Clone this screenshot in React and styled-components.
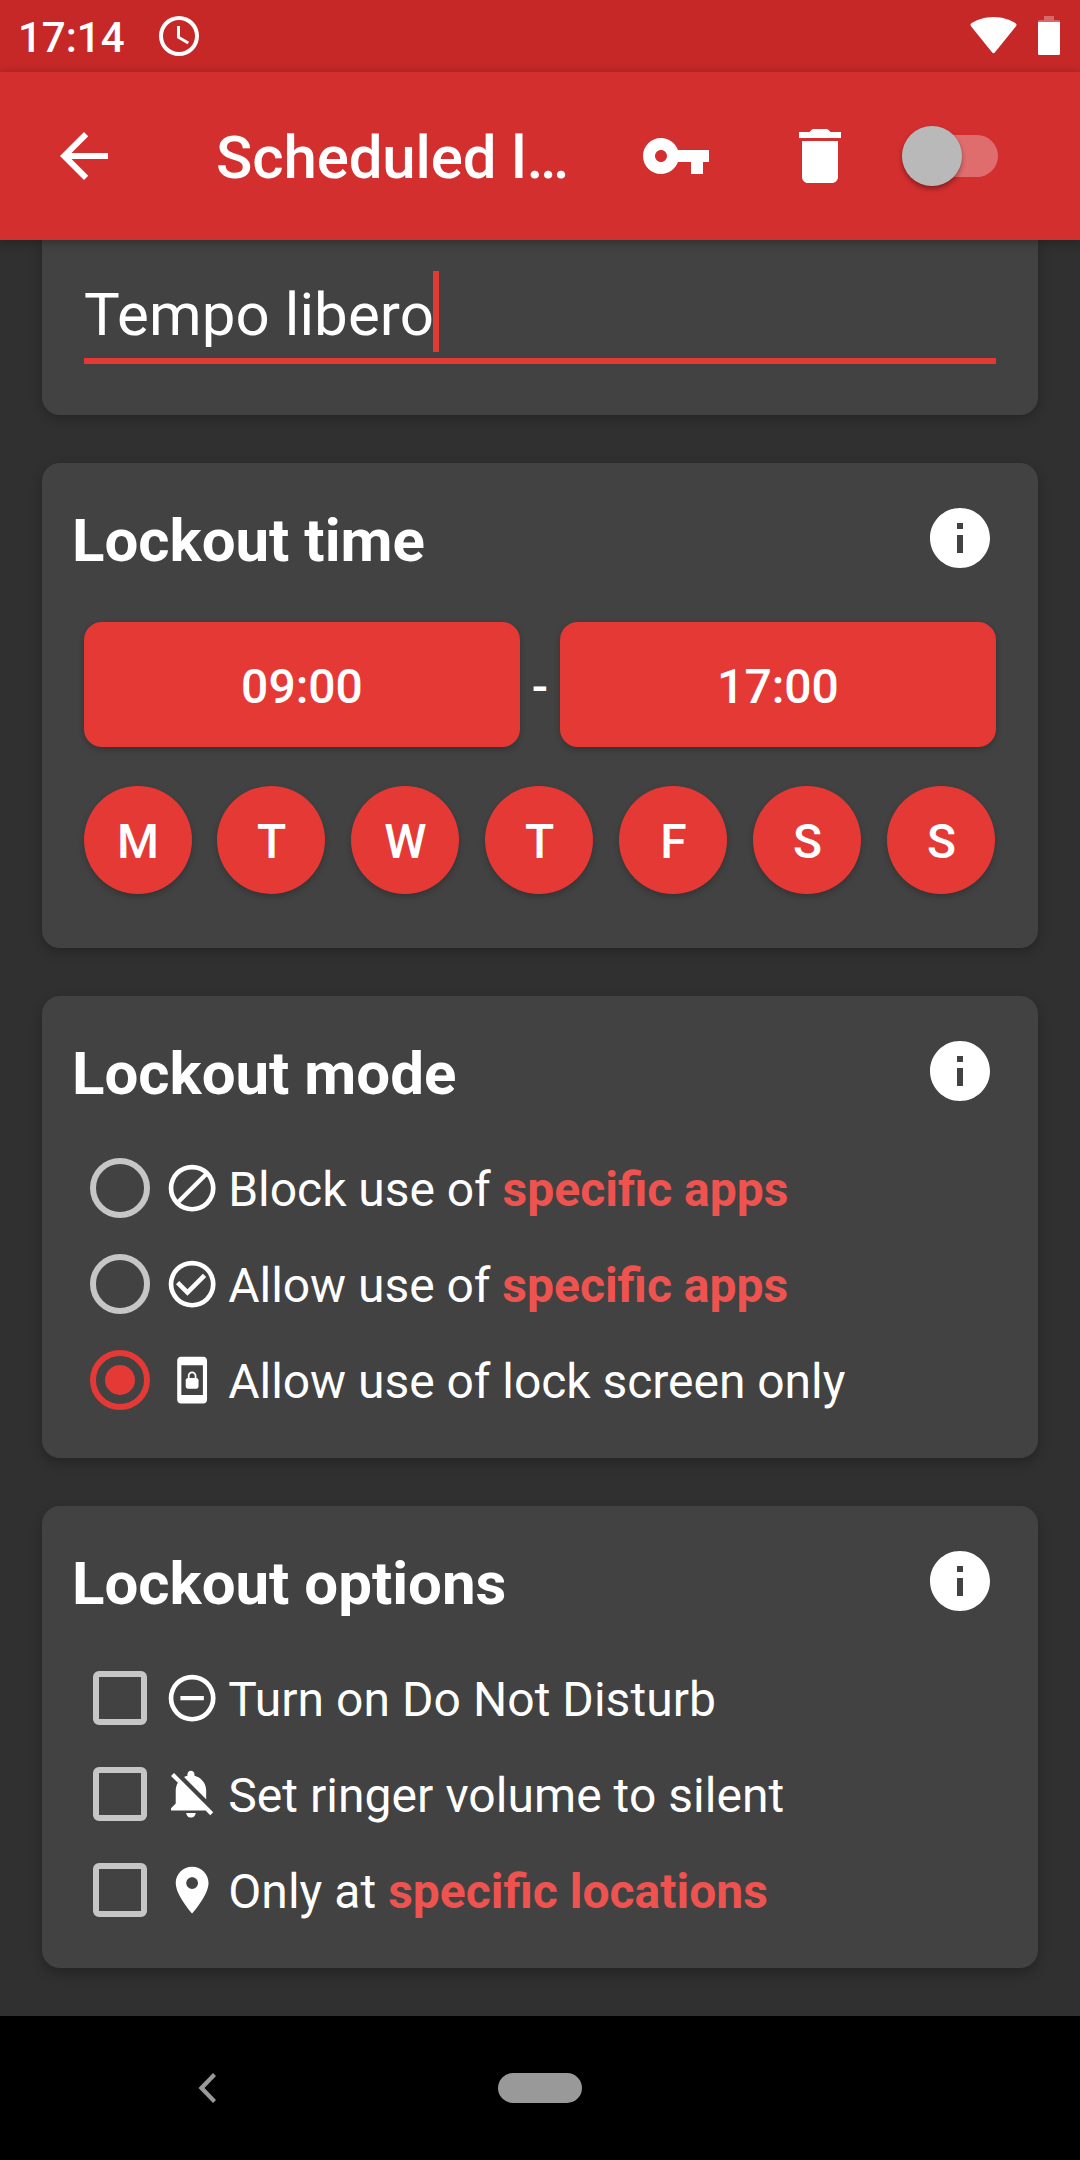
import React from "react";
import styled, { createGlobalStyle } from "styled-components";

const Global = createGlobalStyle`
  * { box-sizing: border-box; }
  body {
    margin: 0;
    background: #303030;
    font-family: Roboto, "Liberation Sans", sans-serif;
    color: #fff;
  }
  button { font: inherit; color: inherit; border: 0; padding: 0; background: none; }
`;

const Screen = styled.div`
  width: 1080px;
  height: 2160px;
  display: flex;
  flex-direction: column;
  overflow: hidden;
  background: #303030;
`;

const Svg = styled.svg`
  display: block;
  flex: none;
  width: ${(p) => p.$w}px;
  height: ${(p) => p.$h || p.$w}px;
  fill: currentColor;
`;

const StatusBar = styled.header`
  flex: none;
  height: 72px;
  padding: 0 20px 0 18px;
  display: flex;
  align-items: center;
  justify-content: space-between;
  background: #c62828;
`;

const StatusGroup = styled.div`
  display: flex;
  align-items: center;
  gap: ${(p) => p.$gap}px;
`;

const Clock = styled.span`
  font-size: 42px;
  font-weight: 500;
  line-height: 48px;
  padding-top: 4px;
`;

const AppBar = styled.nav`
  flex: none;
  height: 168px;
  padding: 0 82px 0 48px;
  display: flex;
  align-items: center;
  background: #d32f2f;
  box-shadow: 0 2px 10px rgba(0, 0, 0, 0.3);
  z-index: 1;
`;

const IconButton = styled.button`
  flex: none;
  margin-right: ${(p) => p.$after}px;
`;

const Title = styled.h1`
  margin: 0 72px 0 0;
  width: 352px;
  font-size: 60px;
  font-weight: 500;
  line-height: 70px;
  letter-spacing: -0.12px;
  padding-top: 4px;
  white-space: nowrap;
`;

const Track = styled.div`
  width: 96px;
  height: 42px;
  display: flex;
  align-items: center;
  border-radius: 21px;
  background: #e06d6d;
`;

const Thumb = styled.div`
  flex: none;
  width: 60px;
  height: 60px;
  border-radius: 50%;
  background: #b9b9b9;
  box-shadow: 0 3px 5px rgba(0, 0, 0, 0.35);
`;

const Content = styled.main`
  flex: 1;
  min-height: 0;
  padding: 0 42px;
  display: flex;
  flex-direction: column;
  gap: 48px;
`;

const Card = styled.section`
  flex: none;
  height: ${(p) => p.$height}px;
  padding: 0 30px 30px;
  border-radius: ${(p) => (p.$cut ? "0 0 18px 18px" : "18px")};
  background: #424242;
  box-shadow: 0 ${(p) => p.$depth}px 12px rgba(0, 0, 0, 0.24);
`;

const NameField = styled.div`
  margin: 0 12px;
  height: 124px;
  padding-top: 31px;
  display: flex;
  align-items: flex-start;
  border-bottom: 6px solid #e53935;
  font-size: 60px;
`;

const NameText = styled.span`
  width: 349px;
  padding-top: 6px;
  line-height: 75px;
  letter-spacing: 0.1px;
  white-space: nowrap;
`;

const Caret = styled.span`
  width: 6px;
  height: 81px;
  background: #e53935;
`;

const CardHeader = styled.div`
  height: 144px;
  padding: 6px 12px 0 0;
  display: flex;
  align-items: center;
  justify-content: space-between;
`;

const CardTitle = styled.h2`
  margin: 0;
  padding-top: 5px;
  font-size: 60px;
  font-weight: 700;
  line-height: 70px;
`;

const TimeRow = styled.div`
  margin: 15px 12px 39px;
  display: flex;
  align-items: center;
  font-size: 48px;
  font-weight: 500;
`;

const TimeButton = styled.button`
  flex: 1;
  height: 125px;
  padding-top: 4px;
  border-radius: 18px;
  background: #e53935;
  box-shadow: 0 3px 6px rgba(0, 0, 0, 0.22);
`;

const Dash = styled.span`
  width: 40px;
  padding-top: 4px;
  text-align: center;
`;

const Days = styled.div`
  margin: 0 12px;
  display: flex;
  gap: 26px;
`;

const Day = styled.button`
  flex: none;
  width: 108px;
  height: 108px;
  padding: 3px 0 0 1px;
  border-radius: 50%;
  background: #e53935;
  box-shadow: 0 3px 6px rgba(0, 0, 0, 0.22);
  font-size: 48px;
  font-weight: 500;

  &:first-child {
    margin-right: -1px;
    padding-left: 0;
  }
`;

const Option = styled.label`
  height: 96px;
  padding-left: 18px;
  display: flex;
  align-items: center;
  font-size: 48px;
`;

const Radio = styled.span`
  width: 60px;
  height: 60px;
  margin-right: 14px;
  display: grid;
  place-items: center;
  border: 6px solid ${(p) => (p.$on ? "#e53935" : "#c6c6c6")};
  border-radius: 50%;

  &::after {
    content: "";
    width: 30px;
    height: 30px;
    border-radius: 50%;
    background: ${(p) => (p.$on ? "#e53935" : "transparent")};
  }
`;

const Checkbox = styled.span`
  width: 54px;
  height: 54px;
  margin: 0 17px 0 3px;
  border: 6px solid #c6c6c6;
  border-radius: 6px;
`;

const OptionText = styled.span`
  margin-left: 8px;
  padding-top: 3px;
  line-height: 56px;
  letter-spacing: ${(p) => p.$tracking || 0}px;
  font-variant-ligatures: common-ligatures;
  white-space: pre;
`;

const Link = styled.b`
  font-weight: 700;
  letter-spacing: 0;
  color: #ef5350;
`;

const NavBar = styled.footer`
  flex: none;
  height: 144px;
  padding-left: 180px;
  display: flex;
  align-items: center;
  background: #000;
  color: #999;
`;

const HomePill = styled.button`
  width: 84px;
  height: 30px;
  margin-left: 264px;
  border-radius: 15px;
  background: #999;
`;

function Icon({ d, size = 72 }) {
  return (
    <Svg viewBox="0 0 24 24" $w={size}>
      <path fillRule="evenodd" d={d} />
    </Svg>
  );
}

const ring = "M12 2a10 10 0 1 0 0 20a10 10 0 1 0 0-20zm0 2a8 8 0 1 1 0 16a8 8 0 1 1 0-16z";
const icons = {
  back: "M20 11H7.83l5.59-5.59L12 4l-8 8 8 8 1.41-1.41L7.83 13H20v-2z",
  key: "M12.65 10C11.83 7.67 9.61 6 7 6c-3.31 0-6 2.69-6 6s2.69 6 6 6c2.61 0 4.83-1.67 5.65-4H17v4h4v-4h2v-4H12.65zM7 14c-1.1 0-2-.9-2-2s.9-2 2-2 2 .9 2 2-.9 2-2 2z",
  trash: "M6 19c0 1.1.9 2 2 2h8c1.1 0 2-.9 2-2V7H6v12zM19 4h-3.5l-.71-.71c-.18-.18-.44-.29-.7-.29H9.91c-.26 0-.52.11-.7.29L8.5 4H5v2h14V4z",
  info: "M12 2C6.48 2 2 6.48 2 12s4.48 10 10 10 10-4.48 10-10S17.52 2 12 2zm1 15h-2v-6h2v6zm0-8h-2V7h2v2z",
  clock: ring + "M12.5 7H11v6l5.25 3.15.75-1.23-4.5-2.67z",
  block: ring,
  check: ring + "M10 17l-4.9-4.9 1.4-1.4 3.5 3.45 6.6-6.6 1.4 1.4z",
  minus: ring + "M7 11.1h10v1.8H7z",
  phone: "M10.18 15.64h3.64c.5 0 .91-.41.91-.91V12c0-.5-.41-.91-.91-.91v-.91c0-1.01-.82-1.82-1.82-1.82s-1.82.81-1.82 1.82v.91c-.5 0-.91.41-.91.91v2.73c0 .5.41.91.91.91zm.73-5.46c0-.6.49-1.09 1.09-1.09s1.09.49 1.09 1.09v.91h-2.18zM16.75 2h-9.5c-.9 0-1.61.72-1.61 1.62v16.76c0 .9.71 1.62 1.61 1.62h9.5c.9 0 1.61-.72 1.61-1.62V3.62c0-.9-.71-1.62-1.61-1.62zM16.6 18.36H7.4V5.64h9.2z",
  pin: "M12 2C8.13 2 5 5.13 5 9c0 5.25 7 13 7 13s7-7.75 7-13c0-3.87-3.13-7-7-7zm0 9.5c-1.38 0-2.5-1.12-2.5-2.5s1.12-2.5 2.5-2.5 2.5 1.12 2.5 2.5-1.12 2.5-2.5 2.5z",
  bell: "M11.5 22c1.1 0 2-.9 2-2h-4c0 1.1.9 2 2 2zM18 10.5c0-3.07-2.13-5.64-5-6.32V3.5c0-.83-.67-1.5-1.5-1.5S10 2.67 10 3.5v.68c-.51.12-.99.32-1.45.56L18 14.18V10.5zm-.27 8.5l2 2L21 19.73 4.27 3 3 4.27l2.92 2.92C5.34 8.16 5 9.29 5 10.5V16l-2 2v1h14.73z",
};

function BlockIcon() {
  return (
    <Svg viewBox="0 0 24 24" $w={56.25}>
      <path fillRule="evenodd" d={icons.block} />
      <path d="M17.3 5.4l1.3 1.3L6.7 18.6l-1.3-1.3z" />
    </Svg>
  );
}

const modes = [
  { icon: <BlockIcon />, text: "Block use of ", link: "specific apps" },
  { icon: <Icon d={icons.check} size={56.25} />, text: "Allow use of ", link: "specific apps" },
  { icon: <Icon d={icons.phone} size={56.25} />, text: "Allow use of lock screen only", on: true },
];

const options = [
  { icon: icons.minus, text: "Turn on Do Not Disturb" },
  { icon: icons.bell, text: "Set ringer volume to silent" },
  { icon: icons.pin, text: "Only at ", link: "specific locations" },
];

function Header({ children }) {
  return (
    <CardHeader>
      <CardTitle>{children}</CardTitle>
      <Icon d={icons.info} />
    </CardHeader>
  );
}

export default function App() {
  return (
    <Screen>
      <Global />
      <StatusBar>
        <StatusGroup $gap={30}>
          <Clock>17:14</Clock>
          <Icon d={icons.clock} size={48} />
        </StatusGroup>
        <StatusGroup $gap={21}>
          <Svg viewBox="0 0 47 40" $w={47} $h={40}>
            <path d="M23.5 1C14.6 1 6.5 3.8.9 7.7Q0 8.7.8 10L22 36.3Q23.5 38 25 36.3L46.2 10Q47 8.7 46.1 7.7C40.5 3.8 32.4 1 23.5 1z" />
          </Svg>
          <Svg viewBox="0 0 22 40" $w={22} $h={40}>
            <path opacity=".3" d="M6 0h10v4h4.5q1.5 0 1.5 1.5V6H0v-.5Q0 4 1.5 4H6z" />
            <path d="M0 6h22v31.5q0 1.5-1.5 1.5h-19Q0 39 0 37.5z" />
          </Svg>
        </StatusGroup>
      </StatusBar>
      <AppBar>
        <IconButton $after={96}><Icon d={icons.back} /></IconButton>
        <Title>Scheduled l…</Title>
        <IconButton $after={72}><Icon d={icons.key} /></IconButton>
        <IconButton $after={46}><Icon d={icons.trash} /></IconButton>
        <Track><Thumb /></Track>
      </AppBar>
      <Content>
        <Card $height={175} $depth={3} $cut>
          <NameField>
            <NameText>Tempo libero</NameText>
            <Caret />
          </NameField>
        </Card>
        <Card $height={485} $depth={4}>
          <Header>Lockout time</Header>
          <TimeRow>
            <TimeButton>09:00</TimeButton>
            <Dash>-</Dash>
            <TimeButton>17:00</TimeButton>
          </TimeRow>
          <Days>
            {["M", "T", "W", "T", "F", "S", "S"].map((d, i) => <Day key={i}>{d}</Day>)}
          </Days>
        </Card>
        <Card $height={462} $depth={5}>
          <Header>Lockout mode</Header>
          {modes.map((m, i) => (
            <Option key={i}>
              <Radio $on={m.on} />
              {m.icon}
              <OptionText $tracking={-0.04}>{m.text}{m.link && <Link>{m.link}</Link>}</OptionText>
            </Option>
          ))}
        </Card>
        <Card $height={462} $depth={6}>
          <Header>Lockout options</Header>
          {options.map((o) => (
            <Option key={o.text}>
              <Checkbox />
              <Icon d={o.icon} size={56.25} />
              <OptionText $tracking={0.05}>{o.text}{o.link && <Link>{o.link}</Link>}</OptionText>
            </Option>
          ))}
        </Card>
      </Content>
      <NavBar>
        <Svg viewBox="0 0 54 54" $w={54}>
          <path d="M33 12l3 3-11.5 12L36 39l-3 3L18.5 27z" />
        </Svg>
        <HomePill />
      </NavBar>
    </Screen>
  );
}
